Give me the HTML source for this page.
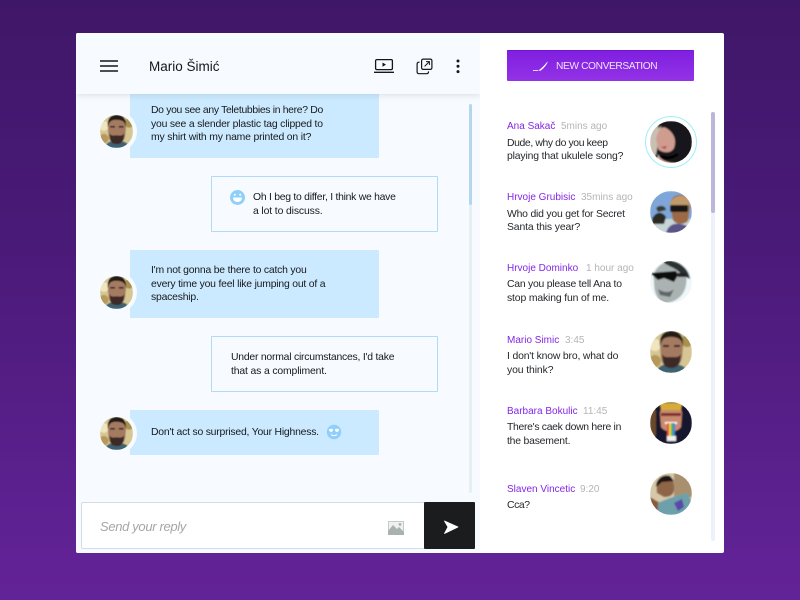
<!DOCTYPE html>
<html><head><meta charset="utf-8">
<style>
html,body{margin:0;padding:0}
body{width:800px;height:600px;overflow:hidden;position:relative;background:linear-gradient(180deg,#3f1768 0%,#4a1a78 40%,#632398 100%);font-family:"Liberation Sans",sans-serif;color:#222}
div,svg,span{position:absolute}
.t{white-space:nowrap;font-size:10.4px;line-height:14px;color:#16191c;letter-spacing:-.2px}
.r{color:#24272b}
.b{background:#cceaff;border-radius:1px}
.o{background:#f7fbff;border:1px solid #b0daf6;border-radius:1px;box-sizing:border-box}
.n{white-space:nowrap;font-size:10px;line-height:13px;color:#8426e6}
.g{white-space:nowrap;font-size:10px;line-height:13px;color:#b5b5b8}
</style></head><body>
<svg style="left:0;top:0;width:0;height:0">
<defs>
<clipPath id="c"><circle cx="21" cy="21" r="21"/></clipPath>
<filter id="bl" x="-10%" y="-10%" width="120%" height="120%"><feGaussianBlur stdDeviation="0.7"/></filter>
<g id="mario"><g clip-path="url(#c)"><g filter="url(#bl)">
<rect width="42" height="42" fill="#d6c693"/>
<circle cx="5" cy="14" r="6" fill="#efe6c0"/><circle cx="37" cy="10" r="6" fill="#a8914f"/><circle cx="5" cy="30" r="6" fill="#b6995a"/>
<path d="M6 42C8 34 14 33 21 33S36 34 38 42Z" fill="#3d6272"/>
<path d="M10 15C10 5 14 3 21 3S33 6 33 16L32 27C30 35 25 37 21 37S12 34 11 27Z" fill="#a47a60"/>
<path d="M10 15C9 4 14 0 21 0S34 3 33 15C32 9 29 6 21 6S12 9 10 15Z" fill="#231a18"/>
<path d="M12 23C14 27 18 26 21 26S29 27 31 23L30 31C27 37 24 37 21 37S14 36 13 31Z" fill="#3e2c25"/>
<rect x="13" y="14" width="6" height="2" fill="#2a1e1a"/><rect x="24" y="14" width="6" height="2" fill="#2a1e1a"/>
</g></g></g>
<g id="ana"><g clip-path="url(#c)"><g filter="url(#bl)">
<rect width="42" height="42" fill="#17161a"/>
<path d="M0 0H12L6 34 0 38Z" fill="#c9c0b4"/>
<path d="M6 18C8 8 12 5 16 7 23 11 27 18 24 27 21 33 12 32 8 28Z" fill="#cf9d90"/>
<path d="M8 8C16 -2 24 4 25 16L30 34 42 24V0H8Z" fill="#17161a"/>
<path d="M11 26L17 25 15 28Z" fill="#b03f4e"/>
<path d="M11 35C16 38 23 37 28 33" stroke="#000" stroke-width="3" fill="none"/>
<path d="M8 33C10 40 20 42 26 42H6Z" fill="#d5b5a8"/>
</g></g></g>
<g id="hrg"><g clip-path="url(#c)"><g filter="url(#bl)">
<rect width="42" height="42" fill="#7fa6d8"/><rect y="28" width="42" height="14" fill="#c6d4d6"/>
<path d="M2 28C6 20 12 20 16 26L14 33 2 33Z" fill="#2b2b22"/><path d="M6 17C10 13 16 15 16 19L8 21Z" fill="#3b3b2d"/>
<path d="M20 14C21 6 26 3 32 4 38 5 40 10 40 16L38 30C34 34 26 34 23 29Z" fill="#9b6a44"/>
<path d="M20 12C24 4 34 2 40 10L40 14H20Z" fill="#c09a6b"/>
<rect x="20" y="14" width="18" height="7" rx="2" fill="#141414"/>
<path d="M16 42C18 34 24 32 30 33S42 36 42 42Z" fill="#5a5288"/>
</g></g></g>
<g id="hrd"><g clip-path="url(#c)"><g filter="url(#bl)">
<rect width="42" height="42" fill="#eef7fa"/>
<path d="M4 20C2 8 12 0 24 0 34 2 38 12 36 24 34 36 24 42 14 42 6 38 4 30 4 20Z" fill="#aab2b2"/>
<path d="M12 0C20 -2 38 2 40 18L32 14C26 6 18 6 12 0Z" fill="#2c3133"/>
<path d="M0 12L26 10 28 14 24 21 14 17 8 19Z" fill="#111"/>
<path d="M26 12L36 12 36 16H28Z" fill="#222"/>
<path d="M8 28C14 32 20 32 24 28L20 36 10 34Z" fill="#5f6668"/>
<path d="M0 30L6 42H0Z" fill="#eef7fa"/>
</g></g></g>
<g id="bar"><g clip-path="url(#c)"><g filter="url(#bl)">
<rect width="42" height="42" fill="#16122e"/>
<rect x="0" y="8" width="6" height="26" fill="#6a4a2a"/>
<path d="M10 12C10 6 14 4 21 4S32 6 32 12L31 25C27 31 15 31 11 25Z" fill="#c98a6e"/>
<path d="M10 1H32L31 8H11Z" fill="#d6ac38"/>
<rect x="11" y="11" width="20" height="3" fill="#7a2f2a"/>
<path d="M15 20H27V22H15Z" fill="#fff"/>
<rect x="17" y="21" width="2" height="13" fill="#e84a3f"/><rect x="19" y="21" width="2" height="14" fill="#f0cf3c"/><rect x="21" y="21" width="2" height="14" fill="#45b85a"/><rect x="23" y="21" width="2" height="13" fill="#4a7ed8"/>
<rect x="17" y="34" width="9" height="5" fill="#f0f0f0"/>
</g></g></g>
<g id="sla"><g clip-path="url(#c)"><g filter="url(#bl)">
<rect width="42" height="42" fill="#d6c8a8"/><rect x="24" width="18" height="24" fill="#a8906e"/>
<path d="M0 24L10 30 10 42H0Z" fill="#8a5a3a"/>
<path d="M7 20C5 10 12 4 18 4S24 10 24 16 20 24 14 24Z" fill="#8f6546"/>
<path d="M6 14C6 5 14 1 20 3L24 8 12 9Z" fill="#1c1814"/>
<path d="M8 30C16 26 28 22 38 20L42 30V42H8Z" fill="#6da0ab"/>
<path d="M24 30L32 26 34 34 28 38Z" fill="#5a4aa8"/>
</g></g></g>
</defs>
</svg>

<!-- card -->
<div style="left:76px;top:33px;width:648px;height:520px;background:#fff;border-radius:2px;overflow:hidden">
  <div style="left:0;top:0;width:404px;height:520px;background:#f7fbff"></div>
</div>

<!-- chat scrollbar -->
<div style="left:469px;top:104px;width:3px;height:389px;background:#e6eef6;border-radius:2px"></div>
<div style="left:469px;top:104px;width:3px;height:101px;background:#b4d6ec;border-radius:2px"></div>

<!-- messages -->
<div class="b" style="left:130px;top:90px;width:249px;height:68px"></div>
<div class="t" style="left:151px;top:104px;letter-spacing:-.32px">Do you see any Teletubbies in here? Do</div>
<div class="t" style="left:151px;top:118px;letter-spacing:-.18px">you see a slender plastic tag clipped to</div>
<div class="t" style="left:151px;top:131px;letter-spacing:-.17px">my shirt with my name printed on it?</div>

<div class="o" style="left:211px;top:176px;width:227px;height:56px"></div>
<svg style="left:229px;top:189px" width="17" height="17" viewBox="0 0 17 17"><circle cx="8.5" cy="8.5" r="7.5" fill="#8fd0fb"/><path d="M4 8.5H13C13 11.5 11 13 8.5 13S4 11.5 4 8.5Z" fill="#fff"/><circle cx="5.8" cy="5.8" r="1" fill="#fff"/><circle cx="11.2" cy="5.8" r="1" fill="#fff"/></svg>
<div class="t" style="left:253px;top:191px;letter-spacing:-.26px">Oh I beg to differ, I think we have</div>
<div class="t" style="left:253px;top:205px;letter-spacing:-.12px">a lot to discuss.</div>

<div class="b" style="left:130px;top:250px;width:249px;height:68px"></div>
<div class="t" style="left:151px;top:264px">I'm not gonna be there to catch you</div>
<div class="t" style="left:151px;top:278px">every time you feel like jumping out of a</div>
<div class="t" style="left:151px;top:291px">spaceship.</div>

<div class="o" style="left:211px;top:336px;width:227px;height:56px"></div>
<div class="t" style="left:231px;top:351px;letter-spacing:-.22px">Under normal circumstances, I'd take</div>
<div class="t" style="left:231px;top:365px;letter-spacing:-.14px">that as a compliment.</div>

<div class="b" style="left:130px;top:410px;width:249px;height:45px"></div>
<div class="t" style="left:151px;top:426px;letter-spacing:-.21px">Don't act so surprised, Your Highness.</div>
<svg style="left:326px;top:424px" width="16" height="16" viewBox="0 0 16 16"><circle cx="8" cy="8" r="7.2" fill="#8fd0fb"/><path d="M5 5.2C4.3 4.3 2.8 5 3 6.2 3.2 7.2 5 8.2 5 8.2S6.8 7.2 7 6.2C7.2 5 5.7 4.3 5 5.2ZM11 5.2C10.3 4.3 8.8 5 9 6.2 9.2 7.2 11 8.2 11 8.2S12.8 7.2 13 6.2C13.2 5 11.7 4.3 11 5.2Z" fill="#fff"/><path d="M5 10.5C6.5 12 9.5 12 11 10.5" stroke="#fff" stroke-width="1" fill="none"/></svg>

<!-- chat avatars -->
<div style="left:96px;top:111px;width:41px;height:41px;border-radius:50%;background:#f7fbff"></div>
<svg style="left:100px;top:115px" width="33" height="33" viewBox="0 0 42 42"><use href="#mario"/></svg>
<div style="left:96px;top:272px;width:41px;height:41px;border-radius:50%;background:#f7fbff"></div>
<svg style="left:100px;top:276px" width="33" height="33" viewBox="0 0 42 42"><use href="#mario"/></svg>
<div style="left:96px;top:413px;width:41px;height:41px;border-radius:50%;background:#f7fbff"></div>
<svg style="left:100px;top:417px" width="33" height="33" viewBox="0 0 42 42"><use href="#mario"/></svg>

<!-- header -->
<div style="left:76px;top:33px;width:404px;height:61px;background:#f7fbff;box-shadow:0 2px 6px rgba(60,80,110,.13);border-radius:2px 0 0 0;clip-path:inset(0 0 -10px 0)"></div>
<svg style="left:99px;top:59px" width="20" height="16" viewBox="0 0 20 16"><path d="M1 2H19M1 7H19M1 12H19" stroke="#14171a" stroke-width="1.4"/></svg>
<div style="left:149px;top:58px;font-size:13.5px;line-height:18px;color:#14171a;white-space:nowrap">Mario Šimić</div>
<svg style="left:373px;top:58px" width="22" height="16" viewBox="0 0 22 16"><rect x="2.6" y="1.6" width="16.8" height="10" rx="1.2" fill="none" stroke="#14171a" stroke-width="1.3"/><path d="M9.5 4.5L13 6.6 9.5 8.7Z" fill="#14171a"/><path d="M1 14.3H21" stroke="#14171a" stroke-width="1.3"/></svg>
<svg style="left:416px;top:58px" width="17" height="17" viewBox="0 0 17 17"><rect x="5.6" y="1.1" width="10.3" height="10.3" rx="1.5" fill="none" stroke="#14171a" stroke-width="1.2"/><path d="M3.6 4.2H3C1.9 4.2 1.1 5 1.1 6.1V13.8C1.1 14.9 1.9 15.7 3 15.7H10.6C11.7 15.7 12.5 14.9 12.5 13.8V13.4" fill="none" stroke="#14171a" stroke-width="1.2"/><path d="M8.6 8.4L13 4M10 3.6H13.4V7" fill="none" stroke="#14171a" stroke-width="1"/></svg>
<svg style="left:455px;top:59px" width="6" height="15" viewBox="0 0 6 15"><circle cx="3" cy="2" r="1.5" fill="#14171a"/><circle cx="3" cy="7.3" r="1.5" fill="#14171a"/><circle cx="3" cy="12.6" r="1.5" fill="#14171a"/></svg>

<!-- input -->
<div style="left:81px;top:502px;width:344px;height:47px;background:#fff;border:1px solid #d3dde5;border-radius:2px;box-sizing:border-box"></div>
<div style="left:100px;top:519px;font-size:13px;line-height:16px;font-style:italic;color:#a3a6a9;white-space:nowrap;letter-spacing:-.34px">Send your reply</div>
<svg style="left:388px;top:521px" width="16" height="14" viewBox="0 0 16 14"><rect width="16" height="14" fill="#c4cbca"/><rect x="1" y="1" width="14" height="9" fill="#eef1f1"/><path d="M0 14V10L5 4 9 8 11 6 16 11V14Z" fill="#aab2b0"/><circle cx="12" cy="3.4" r="1.4" fill="#aab2b0"/></svg>
<div style="left:424px;top:502px;width:51px;height:47px;background:#1b1c1e;border-radius:1px"></div>
<svg style="left:443px;top:519px" width="16" height="16" viewBox="0 0 16 16"><path d="M1.5 2L15 8 1.5 14.5 5 8Z" fill="#fff" stroke="#fff" stroke-width=".8" stroke-linejoin="round"/></svg>

<!-- new conversation -->
<div style="left:507px;top:50px;width:187px;height:31px;background:linear-gradient(180deg,#7f1fe0,#9332e6);border-radius:1px;box-shadow:inset 0 1px 0 #7317cf"></div>
<svg style="left:531px;top:60px" width="18" height="12" viewBox="0 0 18 12"><path d="M2 10.5H7" stroke="#e9d5fb" stroke-width="1"/><path d="M7 10.5C9 9.8 13 6 16.5 1.5 17.2 2.5 14 7.5 9.5 10.8Z" fill="#fff"/></svg>
<div style="left:556px;top:60px;font-size:10.2px;line-height:14px;color:#efe3fd;white-space:nowrap;letter-spacing:-.38px">NEW CONVERSATION</div>

<!-- list scrollbar -->
<div style="left:711px;top:112px;width:4px;height:429px;background:#eef0fb;border-radius:2px"></div>
<div style="left:711px;top:112px;width:4px;height:101px;background:#bcb6da;border-radius:2px"></div>

<!-- list -->
<div class="n" style="left:507px;top:120px">Ana Sakač</div><div class="g" style="left:561px;top:120px">5mins ago</div>
<div class="t r" style="left:507px;top:137px;letter-spacing:-.38px">Dude, why do you keep</div>
<div class="t r" style="left:507px;top:150px;letter-spacing:-.15px">playing that ukulele song?</div>

<div class="n" style="left:507px;top:191px">Hrvoje Grubisic</div><div class="g" style="left:581px;top:191px">35mins ago</div>
<div class="t r" style="left:507px;top:208px">Who did you get for Secret</div>
<div class="t r" style="left:507px;top:221px;letter-spacing:-.12px">Santa this year?</div>

<div class="n" style="left:507px;top:262px">Hrvoje Dominko</div><div class="g" style="left:586px;top:262px">1 hour ago</div>
<div class="t r" style="left:507px;top:278px;letter-spacing:-.23px">Can you please tell Ana to</div>
<div class="t r" style="left:507px;top:292px;letter-spacing:-.14px">stop making fun of me.</div>

<div class="n" style="left:507px;top:334px">Mario Simic</div><div class="g" style="left:565px;top:334px">3:45</div>
<div class="t r" style="left:507px;top:350px;letter-spacing:-.16px">I don't know bro, what do</div>
<div class="t r" style="left:507px;top:364px;letter-spacing:-.1px">you think?</div>

<div class="n" style="left:507px;top:405px">Barbara Bokulic</div><div class="g" style="left:583px;top:405px">11:45</div>
<div class="t r" style="left:507px;top:421px;letter-spacing:-.3px">There's caek down here in</div>
<div class="t r" style="left:507px;top:435px">the basement.</div>

<div class="n" style="left:507px;top:483px">Slaven Vincetic</div><div class="g" style="left:580px;top:483px">9:20</div>
<div class="t r" style="left:507px;top:499px;letter-spacing:-.4px">Cca?</div>

<div style="left:645px;top:116px;width:52px;height:52px;border-radius:50%;border:1.5px solid #9deefa;box-sizing:border-box"></div>
<svg style="left:650px;top:121px" width="42" height="42" viewBox="0 0 42 42"><use href="#ana"/></svg>
<svg style="left:650px;top:191px" width="42" height="42" viewBox="0 0 42 42"><use href="#hrg"/></svg>
<svg style="left:650px;top:261px" width="42" height="42" viewBox="0 0 42 42"><use href="#hrd"/></svg>
<svg style="left:650px;top:331px" width="42" height="42" viewBox="0 0 42 42"><use href="#mario"/></svg>
<svg style="left:650px;top:402px" width="42" height="42" viewBox="0 0 42 42"><use href="#bar"/></svg>
<svg style="left:650px;top:473px" width="42" height="42" viewBox="0 0 42 42"><use href="#sla"/></svg>
</body></html>
